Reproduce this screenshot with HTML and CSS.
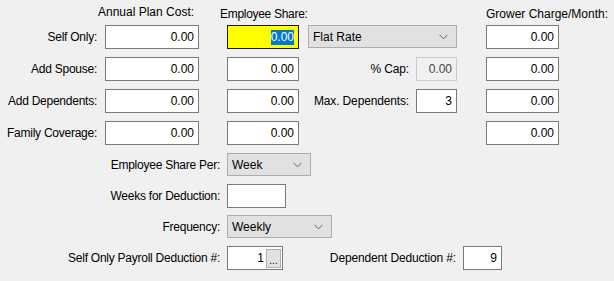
FILE: index.html
```html
<!DOCTYPE html>
<html lang="en">
<head>
    <meta charset="UTF-8">
    <meta name="viewport" content="width=device-width, initial-scale=1.0">
    <title>Plan Cost</title>
    <link rel="stylesheet" href="styles.css">
</head>
<body>
    <div class="plan-grid">
        <div class="head head-annual">Annual Plan Cost:</div>
        <div class="head head-share">Employee Share:</div>
        <div class="head head-grower">Grower Charge/Month:</div>

        <div class="label">Self Only:</div>
        <input class="field w-annual" value="0.00" readonly>
        <div class="field w-share focused"><span class="selected">0.00</span></div>
        <div class="combo w-rate">
            <span>Flat Rate</span>
            <svg class="chevron" width="9" height="6" viewBox="0 0 9 6"><path d="M0.5 0.8 L4.5 4.8 L8.5 0.8" fill="none" stroke="#606060" stroke-width="1"/></svg>
        </div>
        <input class="field w-grower" value="0.00" readonly>

        <div class="label">Add Spouse:</div>
        <input class="field w-annual" value="0.00" readonly>
        <input class="field w-share" value="0.00" readonly>
        <div class="pair">
            <span>% Cap:</span>
            <input class="field w-small disabled" value="0.00" readonly>
        </div>
        <input class="field w-grower" value="0.00" readonly>

        <div class="label">Add Dependents:</div>
        <input class="field w-annual" value="0.00" readonly>
        <input class="field w-share" value="0.00" readonly>
        <div class="pair">
            <span>Max. Dependents:</span>
            <input class="field w-small" value="3" readonly>
        </div>
        <input class="field w-grower" value="0.00" readonly>

        <div class="label">Family Coverage:</div>
        <input class="field w-annual" value="0.00" readonly>
        <input class="field w-share" value="0.00" readonly>
        <div></div>
        <input class="field w-grower" value="0.00" readonly>
    </div>

    <div class="deduction-grid">
        <div class="label">Employee Share Per:</div>
        <div class="combo w-per">
            <span>Week</span>
            <svg class="chevron" width="9" height="6" viewBox="0 0 9 6"><path d="M0.5 0.8 L4.5 4.8 L8.5 0.8" fill="none" stroke="#606060" stroke-width="1"/></svg>
        </div>

        <div class="label">Weeks for Deduction:</div>
        <input class="field w-weeks" value="" readonly>

        <div class="label">Frequency:</div>
        <div class="combo w-freq">
            <span>Weekly</span>
            <svg class="chevron" width="9" height="6" viewBox="0 0 9 6"><path d="M0.5 0.8 L4.5 4.8 L8.5 0.8" fill="none" stroke="#606060" stroke-width="1"/></svg>
        </div>

        <div class="label">Self Only Payroll Deduction #:</div>
        <div class="deduction-row">
            <div class="field w-payroll lookup">
                <span>1</span>
                <button class="dots">...</button>
            </div>
            <div class="pair dep-group">
                <span>Dependent Deduction #:</span>
                <input class="field w-dep" value="9" readonly>
            </div>
        </div>
    </div>
</body>
</html>
```

FILE: styles.css
```css
body {
    margin: 0;
    background-color: #f0f0f0;
    font-family: 'Liberation Sans', Arial, sans-serif;
    font-size: 12px;
    color: #000;
    width: 614px;
    height: 281px;
    overflow: hidden;
}

.plan-grid {
    display: grid;
    grid-template-columns: 105px 122px 81px 178px 73px;
    grid-template-rows: 25px repeat(4, 32px);
    align-items: start;
}

.head {
    align-self: end;
    white-space: nowrap;
    line-height: 15px;
}

.head-annual {
    grid-column: 2;
    margin-left: -7px;
    padding-bottom: 5px;
}

.head-share {
    grid-column: 3;
    margin-left: -7px;
    padding-bottom: 3px;
    letter-spacing: -0.3px;
}

.head-grower {
    grid-column: 5;
    padding-bottom: 3px;
}

.label {
    text-align: right;
    padding-right: 8px;
    line-height: 24px;
    white-space: nowrap;
    letter-spacing: -0.25px;
}

.field {
    box-sizing: border-box;
    height: 24px;
    margin: 0;
    border: 1px solid #7a7a7a;
    background-color: #fff;
    font-family: inherit;
    font-size: 12px;
    color: #000;
    text-align: right;
    padding: 0 4px 0 2px;
    outline: none;
}

div.field {
    display: flex;
    align-items: center;
    justify-content: flex-end;
}

.focused {
    background-color: #ffff00;
    border-color: #1a1a1a;
}

.selected {
    background-color: #0078d7;
    color: #fff;
    line-height: 15px;
}

.disabled {
    background-color: #f0f0f0;
    border-color: #cccccc;
    color: #444;
}

.w-annual { width: 94px; }
.w-share { width: 72px; }
.w-grower { width: 73px; }
.w-small { width: 41px; }
.w-weeks { width: 59px; }
.w-payroll { width: 56px; }
.w-dep { width: 39px; }

.combo {
    box-sizing: border-box;
    height: 23px;
    display: flex;
    align-items: center;
    justify-content: space-between;
    background-color: #e1e1e1;
    border: 1px solid #adadad;
    padding: 0 8px 0 4px;
}

.w-rate { width: 149px; }
.w-per { width: 84px; }
.w-freq { width: 105px; }

.pair {
    width: 149px;
    display: flex;
    align-items: center;
    justify-content: flex-end;
    gap: 7px;
    height: 24px;
}

.pair span {
    letter-spacing: -0.15px;
}

.deduction-grid {
    display: grid;
    grid-template-columns: 227px auto;
    grid-template-rows: 31px 31px 31px 31px;
    align-items: start;
}

.deduction-grid .label {
    padding-right: 7px;
}

.deduction-row {
    width: 275px;
    display: flex;
    align-items: center;
}

.dep-group {
    width: auto;
    margin-left: auto;
}

.lookup {
    padding-right: 1px;
    gap: 2px;
}

.dots {
    box-sizing: border-box;
    width: 15px;
    height: 19px;
    padding: 0;
    margin: 0;
    background-color: #e1e1e1;
    border: 1px solid #adadad;
    font-family: inherit;
    font-size: 10px;
    line-height: 22px;
    color: #000;
}
```
